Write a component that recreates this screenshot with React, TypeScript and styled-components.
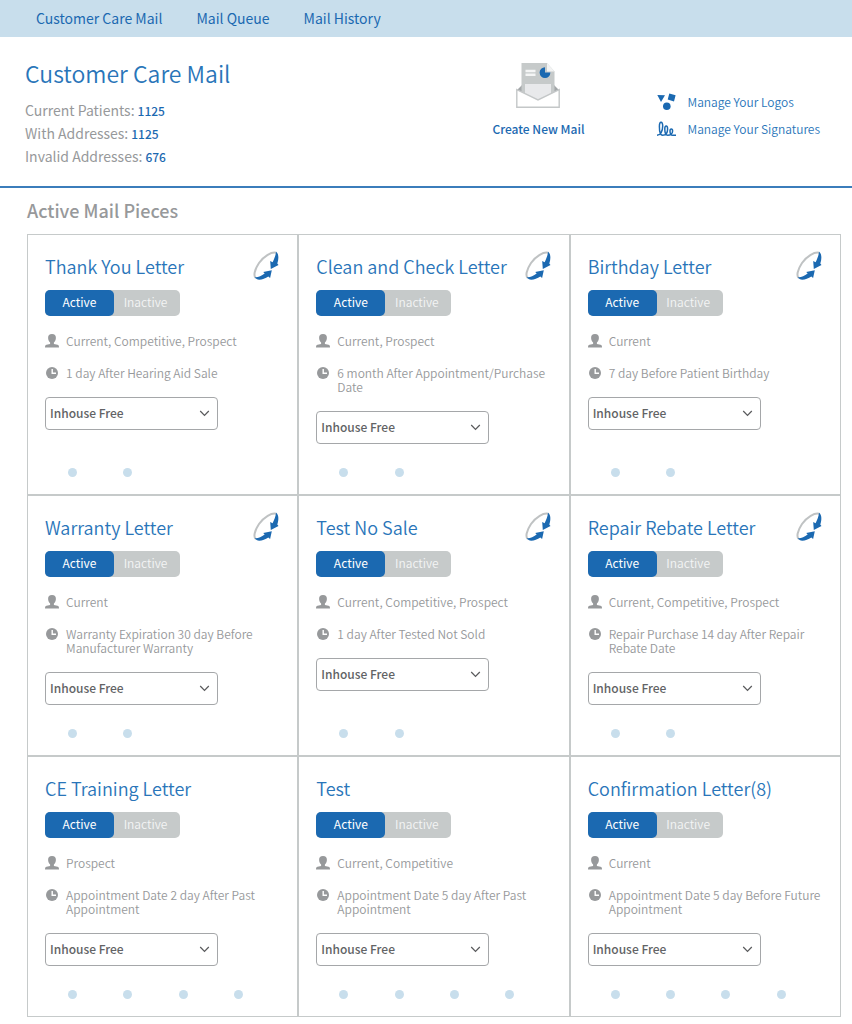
import React from "react";
import styled, { createGlobalStyle } from "styled-components";

const blue = "#1b69b1";
const softBlue = "#2975b9";
const paleBlue = "#c8deec";
const gray = "#97999b";
const silver = "#c6caca";

const GlobalStyle = createGlobalStyle`
  *, *::before, *::after { box-sizing: border-box; }
  body {
    margin: 0;
    background: #fff;
    color: ${gray};
    font-family: "Noto Sans CJK SC", "Open Sans", sans-serif;
    font-size: 12px;
    line-height: 20px;
  }
  h1, h2, h3, p, ul, dl, dd { margin: 0; padding: 0; }
  a { color: ${blue}; text-decoration: none; }
  button, select { font: inherit; }
`;

const Nav = styled.nav`
  display: flex;
  gap: 34px;
  height: 37px;
  padding: 0 36px 2px;
  align-items: center;
  background: ${paleBlue};
`;

const NavLink = styled.a`
  font-size: 14px;
  font-weight: 400;
`;

const Header = styled.header`
  display: flex;
  justify-content: space-between;
  min-height: 151px;
  padding: 20px 32px 0 25px;
  border-bottom: 2px solid #3b7dbb;
`;

const Summary = styled.div`
  flex: 1;
`;

const PageTitle = styled.h1`
  color: ${softBlue};
  font-size: 23px;
  font-weight: 350;
  line-height: 32px;
`;

const Stats = styled.dl`
  margin-top: 10px;
`;

const Stat = styled.div`
  display: flex;
  gap: 3px;
  font-size: 14px;
  font-weight: 400;
  line-height: 23px;
`;

const StatValue = styled.dd`
  color: ${blue};
  font-size: 12px;
  font-weight: 500;
`;

const Actions = styled.div`
  display: flex;
  gap: 73px;
`;

const CreateLink = styled.a`
  display: flex;
  flex-direction: column;
  align-items: center;
  gap: 10px;
  padding-top: 6px;
  font-weight: 500;
`;

const ManageList = styled.ul`
  display: flex;
  flex-direction: column;
  gap: 7px;
  padding-top: 35px;
  list-style: none;
`;

const ManageLink = styled.a`
  display: flex;
  align-items: center;
  gap: 11px;
  color: ${softBlue};
  font-weight: 350;
`;

const Section = styled.main`
  padding: 8px 11px 6px 27px;
`;

const SectionTitle = styled.h2`
  font-size: 18px;
  font-weight: 500;
  line-height: 28px;
`;

const Grid = styled.div`
  display: grid;
  grid-template-columns: repeat(3, 1fr);
  margin-top: 10px;
`;

const Card = styled.article`
  display: flex;
  flex-direction: column;
  min-height: 261px;
  padding: 16px 17px 17px;
  border: 1px solid ${silver};
`;

const CardHead = styled.div`
  display: flex;
  justify-content: space-between;
  height: 39px;
  padding-right: 1px;
`;

const CardTitle = styled.h3`
  color: ${softBlue};
  font-size: 18px;
  font-weight: 350;
  line-height: 30px;
  white-space: nowrap;
`;

const Toggle = styled.div`
  display: flex;
  align-self: flex-start;
  height: 26px;
  border-radius: 5px;
  background: ${silver};
`;

const ToggleButton = styled.button<{ $on?: boolean }>`
  width: ${(p) => (p.$on ? 69 : 66)}px;
  padding: 0 ${(p) => (p.$on ? 0 : 3)}px 3px 0;
  border: 0;
  border-radius: 5px;
  background: ${(p) => (p.$on ? blue : "transparent")};
  color: ${(p) => (p.$on ? "#fff" : "#f4f5f5")};
  font-size: 12px;
  font-weight: ${(p) => (p.$on ? 400 : 350)};
  line-height: 20px;
`;

const Detail = styled.p`
  display: flex;
  gap: 7px;
  margin-top: 18px;
  font-weight: 350;
  line-height: 14px;

  svg { flex: none; }
`;

const SelectBox = styled.div`
  position: relative;
  width: 173px;
  margin-top: 17px;

  svg {
    position: absolute;
    top: 13px;
    right: 8px;
    pointer-events: none;
  }
`;

const Select = styled.select`
  display: block;
  width: 100%;
  height: 33px;
  padding: 0 24px 2px 4px;
  appearance: none;
  border: 1px solid #a5a7a9;
  border-radius: 4px;
  background: #fff;
  color: #626365;
  font-size: 12px;
  font-weight: 500;
`;

const Dots = styled.ul`
  display: grid;
  grid-template-columns: repeat(4, 1fr);
  margin: auto 14px 0 0;
  list-style: none;
`;

const Dot = styled.li`
  justify-self: center;
  width: 9px;
  height: 9px;
  border-radius: 50%;
  background: ${paleBlue};
`;

const MailIcon = () => (
  <svg width="44" height="46" viewBox="0 0 44 46" aria-hidden="true">
    <path d="M0.500 27.500 6 22v9zM43.500 27.500 38 22v9z" fill="#a3a7a9" />
    <path d="M5.500 0H31l7.500 8.500V32h-33z" fill={silver} />
    <path d="M31 0v8.500h7.500z" fill="#f3f4f4" />
    <path d="M9 21h26V32L22 39 9 32z" fill="#e8e9eb" />
    <path d="M9.500 6.800h10v2.500h-10zM9.500 10.500h10v2.500h-10z" fill="#f4f5f5" />
    <path d="M29 4.200a5.400 5.400 0 1 0 5.400 5.400H29z" fill={blue} />
    <path d="M0.800 26.600 22 37 43.200 26.600V44.200H0.800z" fill="#fff" stroke="#c4c7c8" strokeWidth="1.400" />
  </svg>
);

const LogosIcon = () => (
  <svg width="19" height="18" viewBox="0 0 19 18" aria-hidden="true" fill={blue}>
    <path d="M0.300 2 8 2.300 4 9zM12.300 0.600l6.300 1.600-1.600 6.300-6.300-2z" />
    <circle cx="9.800" cy="13.200" r="3.800" />
  </svg>
);

const SignatureIcon = () => (
  <svg width="19" height="16" viewBox="0 0 19 16" aria-hidden="true" fill="none" stroke={blue} strokeWidth="1.500">
    <path d="M0 14.300C3.500 14.300 5.700 10 5.700 5 5.700 0 2.400 0 2.400 5.500c0 6 .9 8.800 3.200 8.800 3 0 5-2.500 5-6.300 0-4-2.800-4-2.800 0 0 4.300.6 6.300 2.900 6.300 2.600 0 4.900-1.600 4.900-4.300 0-2.800-2.600-2.800-2.600 0 0 2.900.6 4.300 2.600 4.300h3.400" />
  </svg>
);

const CycleIcon = () => (
  <svg width="26" height="30" viewBox="0 0 26 30" aria-hidden="true">
    <path d="M23.200 1.800C18.500.6 11 5 6 12 1.500 18.700.2 25 2.800 27" fill="none" stroke="#bfc2c3" strokeWidth="2" />
    <path d="M23 .8c2.900 1.800 2.900 7 1.300 11.800l1.200 1.400-7.700 4-.6-8 2.400 1.200c1.700-3.400 3.200-7 3.400-10.400z" fill={blue} />
    <path d="M1.800 26.300c3 .4 6.500-1.300 9.900-3.700L10.200 21l8.600-1.700-1.700 7.700-1.800-1.600C10.800 28.500 4 30.600 1.800 26.300z" fill={blue} />
  </svg>
);

const PersonIcon = () => (
  <svg width="14" height="14" viewBox="0 0 14 14" aria-hidden="true" fill={gray}>
    <path d="M7 0c2.700 0 4 1.600 3.900 4C10.800 6.300 9.900 7.500 8.900 8.500v1.500l3.600.8c1 .3 1.500 1 1.500 2.700H0c0-1.700.5-2.400 1.500-2.700l3.600-.8V8.500C4.100 7.500 3.200 6.300 3.100 4 3 1.600 4.300 0 7 0z" />
  </svg>
);

const ClockIcon = () => (
  <svg width="14" height="14" viewBox="0 0 14 14" aria-hidden="true">
    <circle cx="7" cy="7" r="6" fill={gray} />
    <path d="M7.200 3v4.300H11" fill="none" stroke="#fff" strokeWidth="1.400" />
  </svg>
);

const ChevronIcon = () => (
  <svg width="11" height="7" viewBox="0 0 11 7" aria-hidden="true">
    <path d="M1.200 1 5.500 5.500 9.800 1" fill="none" stroke="#58595b" strokeWidth="1.200" />
  </svg>
);

type Piece = { name: string; audience: string; timing: string; dots: number; recurring?: boolean };

const pieces: Piece[] = [
  { name: "Thank You Letter", audience: "Current, Competitive, Prospect", timing: "1 day After Hearing Aid Sale", dots: 2, recurring: true },
  { name: "Clean and Check Letter", audience: "Current, Prospect", timing: "6 month After Appointment/Purchase Date", dots: 2, recurring: true },
  { name: "Birthday Letter", audience: "Current", timing: "7 day Before Patient Birthday", dots: 2, recurring: true },
  { name: "Warranty Letter", audience: "Current", timing: "Warranty Expiration 30 day Before Manufacturer Warranty", dots: 2, recurring: true },
  { name: "Test No Sale", audience: "Current, Competitive, Prospect", timing: "1 day After Tested Not Sold", dots: 2, recurring: true },
  { name: "Repair Rebate Letter", audience: "Current, Competitive, Prospect", timing: "Repair Purchase 14 day After Repair Rebate Date", dots: 2, recurring: true },
  { name: "CE Training Letter", audience: "Prospect", timing: "Appointment Date 2 day After Past Appointment", dots: 4 },
  { name: "Test", audience: "Current, Competitive", timing: "Appointment Date 5 day After Past Appointment", dots: 4 },
  { name: "Confirmation Letter(8)", audience: "Current", timing: "Appointment Date 5 day Before Future Appointment", dots: 4 },
];

const stats = [
  ["Current Patients:", "1125"],
  ["With Addresses:", "1125"],
  ["Invalid Addresses:", "676"],
];

function MailCard({ piece }: { piece: Piece }) {
  return (
    <Card>
      <CardHead>
        <CardTitle>{piece.name}</CardTitle>
        {piece.recurring && <CycleIcon />}
      </CardHead>
      <Toggle>
        <ToggleButton type="button" $on>Active</ToggleButton>
        <ToggleButton type="button">Inactive</ToggleButton>
      </Toggle>
      <Detail><PersonIcon /><span>{piece.audience}</span></Detail>
      <Detail><ClockIcon /><span>{piece.timing}</span></Detail>
      <SelectBox>
        <Select aria-label={`Delivery for ${piece.name}`}>
          <option>Inhouse Free</option>
        </Select>
        <ChevronIcon />
      </SelectBox>
      <Dots>
        {Array.from({ length: piece.dots }, (_, i) => <Dot key={i} />)}
      </Dots>
    </Card>
  );
}

export default function App() {
  return (
    <>
      <GlobalStyle />
      <Nav>
        <NavLink href="#care">Customer Care Mail</NavLink>
        <NavLink href="#queue">Mail Queue</NavLink>
        <NavLink href="#history">Mail History</NavLink>
      </Nav>
      <Header>
        <Summary>
          <PageTitle>Customer Care Mail</PageTitle>
          <Stats>
            {stats.map(([label, value]) => (
              <Stat key={label}><dt>{label}</dt><StatValue>{value}</StatValue></Stat>
            ))}
          </Stats>
        </Summary>
        <Actions>
          <CreateLink href="#create"><MailIcon />Create New Mail</CreateLink>
          <ManageList>
            <li><ManageLink href="#logos"><LogosIcon />Manage Your Logos</ManageLink></li>
            <li><ManageLink href="#signatures"><SignatureIcon />Manage Your Signatures</ManageLink></li>
          </ManageList>
        </Actions>
      </Header>
      <Section>
        <SectionTitle>Active Mail Pieces</SectionTitle>
        <Grid>
          {pieces.map((piece) => <MailCard key={piece.name} piece={piece} />)}
        </Grid>
      </Section>
    </>
  );
}
